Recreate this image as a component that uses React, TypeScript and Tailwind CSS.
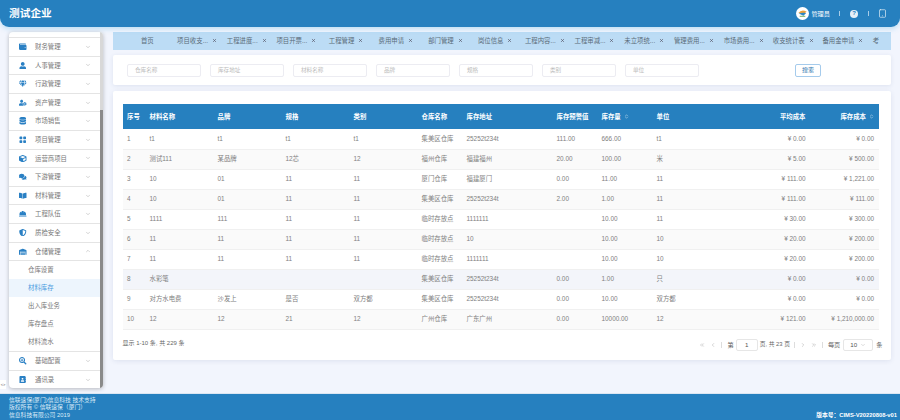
import { ChevronDown, ChevronUp, ChevronLeft, ChevronRight, ChevronsLeft, ChevronsRight, ChevronsUpDown, Tablet, X } from "lucide-react";
import {
  FaWallet,
  FaUser,
  FaGem,
  FaUserCog,
  FaDatabase,
  FaCube,
  FaComments,
  FaBookOpen,
  FaHardHat,
  FaShieldAlt,
  FaWarehouse,
  FaSearchPlus,
  FaAddressBook,
} from "react-icons/fa";
import { BsGridFill } from "react-icons/bs";

const font = { fontFamily: '"Liberation Sans", "Noto Sans CJK SC", sans-serif' };

const menuTop = [
  { name: "财务管理", icon: FaWallet },
  { name: "人事管理", icon: FaUser },
  { name: "行政管理", icon: FaGem },
  { name: "资产管理", icon: FaUserCog },
  { name: "市场销售", icon: FaDatabase },
  { name: "项目管理", icon: BsGridFill },
  { name: "运营商项目", icon: FaCube },
  { name: "下游管理", icon: FaComments },
  { name: "材料管理", icon: FaBookOpen },
  { name: "工程队伍", icon: FaHardHat },
  { name: "质检安全", icon: FaShieldAlt },
];

const subMenu = ["仓库设置", "材料库存", "出入库业务", "库存盘点", "材料流水"];

const tabs = [
  "项目收支...",
  "工程进度...",
  "项目开票...",
  "工程管理",
  "费用申请",
  "部门管理",
  "岗位信息",
  "工程内容...",
  "工程审减...",
  "未立项统...",
  "管理费用...",
  "市场费用...",
  "收支统计表",
  "备用金申请",
];

const filters = ["仓库名称", "库存地址", "材料名称", "品牌", "规格", "类别", "单位"];

const rows = [
  ["1", "t1", "t1", "t1", "t1", "集美区仓库", "25252t234t", "111.00", "666.00", "t1", "¥ 0.00", "¥ 0.00"],
  ["2", "测试111", "某品牌", "12芯", "12", "福州仓库", "福建福州", "20.00", "100.00", "米", "¥ 5.00", "¥ 500.00"],
  ["3", "10", "01", "11", "11", "厦门仓库", "福建厦门", "0.00", "11.00", "11", "¥ 111.00", "¥ 1,221.00"],
  ["4", "10", "01", "11", "11", "集美区仓库", "25252t234t", "2.00", "1.00", "11", "¥ 111.00", "¥ 111.00"],
  ["5", "1111", "111", "11", "11", "临时存放点", "1111111", "", "10.00", "11", "¥ 30.00", "¥ 300.00"],
  ["6", "11", "11", "11", "11", "临时存放点", "10", "", "10.00", "10", "¥ 20.00", "¥ 200.00"],
  ["7", "11", "11", "11", "11", "临时存放点", "1111111", "", "10.00", "10", "¥ 20.00", "¥ 200.00"],
  ["8", "水彩笔", "", "", "", "集美区仓库", "25252t234t", "0.00", "1.00", "只", "¥ 0.00", "¥ 0.00"],
  ["9", "对方水电费", "沙发上", "是否", "双方都", "集美区仓库", "25252t234t", "0.00", "10.00", "双方都", "¥ 0.00", "¥ 0.00"],
  ["10", "12", "12", "21", "12", "广州仓库", "广东广州", "0.00", "10000.00", "12", "¥ 121.00", "¥ 1,210,000.00"],
];

function MenuRow({ name, icon: Icon, open }: { name: string; icon: React.ComponentType<{ className?: string }>; open?: boolean }) {
  return (
    <div className="flex h-[18.6px] items-center border-b border-[#e4e4e4] pl-[10px] pr-[9px] text-[6.4px] text-[#777]">
      <Icon className="h-[7.5px] w-[7.5px] text-[#2a80c4]" />
      <span className="ml-[8.5px] flex-1">{name}</span>
      {open ? <ChevronUp className="h-[6px] w-[6px] text-[#aaa]" /> : <ChevronDown className="h-[6px] w-[6px] text-[#aaa]" />}
    </div>
  );
}

function Sidebar() {
  return (
    <div className="ml-[9px] flex h-[356px] w-[94px] overflow-hidden rounded-[4px] bg-white shadow-[0_1px_4px_rgba(0,0,0,0.25)]">
      <div className="w-[91px]">
        <div className="h-[6px] border-b border-[#e4e4e4]" />
        {menuTop.map((m) => (
          <MenuRow key={m.name} name={m.name} icon={m.icon} />
        ))}
        <MenuRow name="仓储管理" icon={FaWarehouse} open />
        <div className="border-b border-[#e4e4e4]">
          {subMenu.map((s) => (
            <div
              key={s}
              className={`flex h-[18px] items-center pl-[19px] text-[6.4px] ${
                s === "材料库存" ? "bg-[#edf5fd] text-[#4a9be0]" : "text-[#777]"
              }`}
            >
              {s}
            </div>
          ))}
        </div>
        <MenuRow name="基础配置" icon={FaSearchPlus} />
        <MenuRow name="通讯录" icon={FaAddressBook} />
      </div>
      <div className="flex w-[3px] flex-col bg-[#d8d8d8]">
        <div className="h-[78px]" />
        <div className="flex-1 bg-[#8a8a8a]" />
      </div>
    </div>
  );
}

function TabBar() {
  return (
    <div className="flex h-[18px] overflow-hidden bg-[#bcdcf5] pb-[1px] pl-[9.5px] text-[6.4px] text-[#5a6b78]">
      <div className="flex w-[49.7px] shrink-0 items-center justify-center">首页</div>
      {tabs.map((t) => (
        <div key={t} className="flex w-[49.7px] shrink-0 items-center justify-center gap-[4px] whitespace-nowrap">
          <span>{t}</span>
          <X className="h-[5px] w-[5px] shrink-0 text-[#556]" strokeWidth={3} />
        </div>
      ))}
      <div className="flex shrink-0 items-center pl-[5px]">考</div>
    </div>
  );
}

function SearchCard() {
  return (
    <div className="mt-[5px] flex h-[30px] items-center rounded-[2px] bg-white pl-[14px] pr-[70px] shadow-[0_1px_4px_rgba(40,60,120,0.1)]">
      <div className="flex gap-[9px]">
        {filters.map((f) => (
          <div
            key={f}
            className="flex h-[13px] w-[74px] items-center rounded-[2px] border border-[#ececf2] pl-[7px] text-[5.6px] text-[#bcbcbc]"
          >
            {f}
          </div>
        ))}
      </div>
      <button className="ml-auto flex h-[13px] w-[26px] items-center justify-center rounded-[2px] border border-[#a5cbec] text-[6px] text-[#2f74ad]">
        搜索
      </button>
    </div>
  );
}

function SortHead({ label }: { label: string }) {
  return (
    <span className="inline-flex items-center gap-[3px]">
      {label}
      <ChevronsUpDown className="h-[5px] w-[5px] text-[#bcd8ee]" strokeWidth={3} />
    </span>
  );
}

function StockTable() {
  return (
    <table className="w-[756px] table-fixed border-collapse text-[6.4px]">
      <colgroup>
        <col className="w-[22.5px]" />
        <col className="w-[68px]" />
        <col className="w-[68px]" />
        <col className="w-[68px]" />
        <col className="w-[68px]" />
        <col className="w-[45px]" />
        <col className="w-[90px]" />
        <col className="w-[45px]" />
        <col className="w-[55px]" />
        <col className="w-[90px]" />
        <col className="w-[68px]" />
        <col className="w-[68.5px]" />
      </colgroup>
      <thead>
        <tr className="h-[25px] bg-[#2680bf] text-left font-bold text-white">
          <th className="px-[4.5px]">序号</th>
          <th className="px-[4.5px]">材料名称</th>
          <th className="px-[4.5px]">品牌</th>
          <th className="px-[4.5px]">规格</th>
          <th className="px-[4.5px]">类别</th>
          <th className="px-[4.5px]">仓库名称</th>
          <th className="px-[4.5px]">库存地址</th>
          <th className="whitespace-nowrap px-[4.5px]">库存预警值</th>
          <th className="px-[4.5px]">
            <SortHead label="库存量" />
          </th>
          <th className="px-[4.5px]">单位</th>
          <th className="px-[4.5px] text-right">平均成本</th>
          <th className="px-[4.5px] text-right">
            <SortHead label="库存成本" />
          </th>
        </tr>
      </thead>
      <tbody>
        {rows.map((r, i) => (
          <tr
            key={r[0]}
            className={`h-[20px] border-b border-[#f0f0f0] text-[#808080] ${
              i === 7 ? "bg-[#f3f5fa]" : i % 2 === 1 ? "bg-[#fafafa]" : "bg-white"
            }`}
          >
            {r.map((c, j) => (
              <td key={j} className={`whitespace-nowrap px-[4.5px] ${j >= 10 ? "text-right" : ""}`}>
                {c}
              </td>
            ))}
          </tr>
        ))}
      </tbody>
    </table>
  );
}

function Pager() {
  return (
    <div className="flex h-[30px] w-[760px] items-center justify-between text-[6px] text-[#666]">
      <span className="-mt-[3px]">显示 1-10 条, 共 229 条</span>
      <div className="flex items-center text-[6.2px]">
        <ChevronsLeft className="h-[6px] w-[6px] text-[#aaa]" />
        <ChevronLeft className="ml-[5px] h-[6px] w-[6px] text-[#aaa]" />
        <span className="ml-[5px] h-[6px] w-px bg-[#ddd]" />
        <span className="ml-[5px]">第</span>
        <span className="ml-[2px] flex h-[12px] w-[22px] items-center justify-center rounded-[2px] border border-[#e6e6e6] text-[#555]">1</span>
        <span className="ml-[2px] text-[5.8px]">页, 共 23 页</span>
        <span className="ml-[4px] h-[6px] w-px bg-[#ddd]" />
        <ChevronRight className="ml-[5px] h-[6px] w-[6px] text-[#aaa]" />
        <ChevronsRight className="ml-[5px] h-[6px] w-[6px] text-[#aaa]" />
        <span className="ml-[5px] h-[6px] w-px bg-[#ddd]" />
        <span className="ml-[5px]">每页</span>
        <span className="ml-[3px] flex h-[12px] w-[30px] items-center justify-between rounded-[2px] border border-[#e6e6e6] px-[6px] text-[#555]">
          10
          <ChevronDown className="h-[6px] w-[6px] text-[#bbb]" />
        </span>
        <span className="ml-[3px]">条</span>
      </div>
    </div>
  );
}

export default function App() {
  return (
    <div className="relative flex h-[420px] w-[900px] flex-col overflow-hidden bg-[#f2f5fd]" style={font}>
      <header className="relative z-10 flex h-[27px] shrink-0 items-center rounded-b-[9px] bg-[#2680bf] pl-[9px] pr-[13px] text-white shadow-[0_2px_5px_rgba(90,180,230,0.35)]">
        <span className="text-[10.7px] font-bold">测试企业</span>
        <div className="ml-auto flex items-center text-[6.2px]">
          <svg viewBox="0 0 14 14" className="h-[13px] w-[13px]">
            <circle cx="7" cy="7" r="7" fill="#fff" />
            <path d="M2.5 6.5 Q6 2 11.5 5 L8 7.5 Z" fill="#e9a23b" />
            <path d="M3 7 Q7 5.5 11 6.5 L8 9.5 Z" fill="#2d86c4" />
            <path d="M4 10 H10" stroke="#6aa84f" strokeWidth="1" />
          </svg>
          <span className="ml-[2px]">管理员</span>
          <span className="ml-[9px] h-[5px] w-px bg-[#a8cde8]" />
          <span className="ml-[10px] flex h-[8px] w-[8px] items-center justify-center rounded-full bg-[#e6f0f8] text-[6px] font-bold text-[#2680bf]">?</span>
          <span className="ml-[10px] h-[5px] w-px bg-[#a8cde8]" />
          <Tablet className="ml-[9px] h-[9px] w-[9px] text-white" strokeWidth={1.6} />
        </div>
      </header>

      <div className="flex flex-1 pt-[5px]">
        <Sidebar />
        <main className="ml-[10px] w-[778px]">
          <TabBar />
          <SearchCard />
          <div className="mt-[6px] h-[269px] rounded-[2px] bg-white pl-[9.5px] pt-[13px] shadow-[0_1px_5px_rgba(40,60,120,0.1)]">
            <StockTable />
            <Pager />
          </div>
        </main>
      </div>

      <footer className="flex h-[27px] shrink-0 items-end justify-between border-t border-[#dbe6f2] bg-[#2680bf] pl-[9px] pr-[3px] text-[5.8px] leading-[7.8px] text-[#dcecf8]">
        <div>
          <p>信联速保(厦门)信息科技 技术支持</p>
          <p>版权所有 © 信联速保（厦门）</p>
          <p>信息科技有限公司 2019</p>
        </div>
        <span className="font-bold text-white">版本号：CIMS-V20220808-v01</span>
      </footer>

      {/* 左下角的调试小角标 */}
      <div className="absolute left-0 top-[380px] flex h-[9px] w-[6px] items-center justify-center bg-white text-[4px] leading-[4px] text-[#555]">
        &lt;&gt;
      </div>
    </div>
  );
}
